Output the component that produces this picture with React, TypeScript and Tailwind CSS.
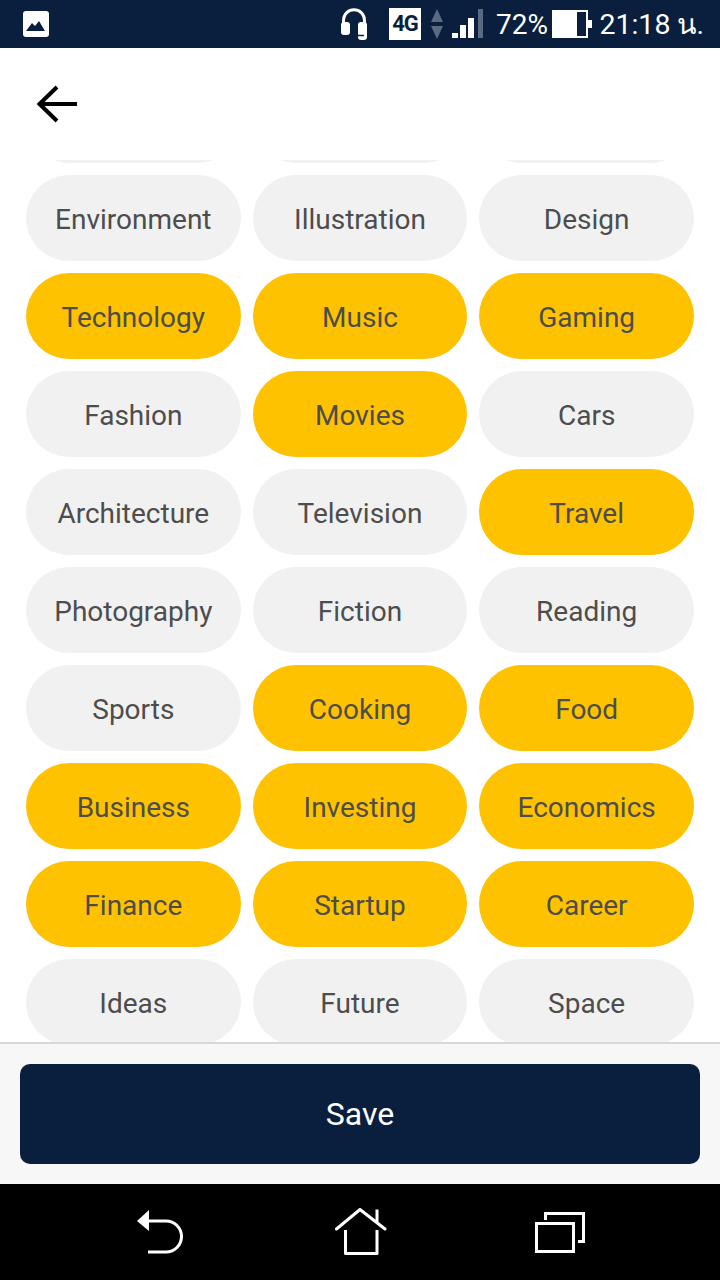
import React from 'react';

const rows: [string, boolean][][] = [
  [['', false], ['', false], ['', false]],
  [['Environment', false], ['Illustration', false], ['Design', false]],
  [['Technology', true], ['Music', true], ['Gaming', true]],
  [['Fashion', false], ['Movies', true], ['Cars', false]],
  [['Architecture', false], ['Television', false], ['Travel', true]],
  [['Photography', false], ['Fiction', false], ['Reading', false]],
  [['Sports', false], ['Cooking', true], ['Food', true]],
  [['Business', true], ['Investing', true], ['Economics', true]],
  [['Finance', true], ['Startup', true], ['Career', true]],
  [['Ideas', false], ['Future', false], ['Space', false]],
];

const StatusBar = () => (
  <div className="h-12 bg-[#0a1f3d] flex items-center text-white shrink-0">
    <svg className="ml-[23px]" width="27" height="26" viewBox="0 0 27 26">
      <rect width="26" height="26" x="0" y="0" rx="3" fill="#fff" />
      <path d="M3 20 L9 12 L12 15 L16 10 L22 20 Z" fill="#0a1f3d" />
    </svg>
    <div className="flex-1" />
    <svg width="26" height="32" viewBox="0 0 26 32" fill="none">
      <path d="M2.5 17 V13 C2.5 -2 23.5 -2 23.5 13 V17" stroke="#fff" strokeWidth="3" />
      <rect x="0" y="14" width="9" height="13" rx="3" fill="#fff" />
      <rect x="17" y="14" width="9" height="18" rx="3" fill="#fff" />
      <path d="M16 27.5 H23" stroke="#0a1f3d" strokeWidth="1.5" />
    </svg>
    <div className="ml-[22px] w-8 h-8 bg-white text-[#0a1f3d] text-[22px] font-bold leading-8 text-center tracking-[-1px]">4G</div>
    <svg className="ml-[9px]" width="14" height="32" viewBox="0 0 14 32">
      <path d="M7 1 L13 14 H1 Z" fill="#5a6a80" />
      <path d="M1 18 H13 L7 31 Z" fill="#5a6a80" />
    </svg>
    <svg className="ml-[8px]" width="32" height="30" viewBox="0 0 32 30">
      <rect x="0" y="24" width="6" height="5" fill="#fff" />
      <rect x="8" y="16" width="6" height="13" fill="#fff" />
      <rect x="16" y="9" width="6" height="20" fill="#fff" />
      <rect x="26" y="0" width="5" height="29" fill="#5a6a80" />
    </svg>
    <span className="ml-[12px] w-[52px] pt-[2px] text-[28px] leading-none whitespace-nowrap">72%</span>
    <svg className="ml-[4px]" width="40" height="28" viewBox="0 0 40 28">
      <rect x="0" y="0" width="36" height="28" fill="#fff" />
      <rect x="25" y="2" width="9" height="24" fill="#0a1f3d" />
      <rect x="36" y="10" width="4" height="8" fill="#fff" />
    </svg>
    <span className="ml-[6px] mr-[16px] w-[106px] pt-[2px] text-right text-[28.5px] leading-none whitespace-nowrap">21:18 น.</span>
  </div>
);

const Header = () => (
  <div className="h-28 bg-white flex items-center pl-9 shrink-0">
    <svg width="42" height="40" viewBox="0 0 42 40" fill="none" stroke="#000" strokeWidth="4">
      <path d="M41 20 H4" />
      <path d="M21 3 L3.5 20 L21 37" />
    </svg>
  </div>
);

const Chip = ({ label, on }: { label: string; on: boolean }) => (
  <div className={`h-[86px] rounded-[43px] pt-1 flex items-center justify-center text-[28px] text-[#4d4d4d] ${on ? 'bg-[#ffc200]' : 'bg-[#f1f1f1]'}`}>
    {label}
  </div>
);

const NavBar = () => (
  <div className="h-24 bg-black flex items-start shrink-0 pl-[137px]">
    <svg className="mt-[25px]" width="48" height="46" viewBox="0 0 48 46" fill="none">
      <path d="M12 1 V22 L0 12 Z" fill="#fff" />
      <path d="M11 12 H29 A15.5 15.5 0 0 1 29 43 H11" stroke="#fff" strokeWidth="3" />
    </svg>
    <svg className="mt-6 ml-[150px]" width="52" height="48" viewBox="0 0 52 48" fill="none" stroke="#fff" strokeWidth="3" strokeLinecap="round" strokeLinejoin="round">
      <path d="M1.5 21 L25 1.5 L50 21" />
      <path d="M42 1.5 V14" strokeLinecap="butt" />
      <path d="M10.5 22 V45.5 H42 V22" strokeLinecap="butt" />
    </svg>
    <svg className="mt-[27px] ml-[148px]" width="52" height="44" viewBox="0 0 52 44" fill="none" stroke="#fff" strokeWidth="3">
      <rect x="1.5" y="12.5" width="37" height="28" />
      <path d="M10.5 9 V2.5 H48.5 V30.5 H43" />
    </svg>
  </div>
);

export default function App() {
  return (
    <div className="w-[720px] h-[1280px] flex flex-col overflow-hidden bg-white font-['Roboto',sans-serif]">
      <StatusBar />
      <Header />
      <div className="flex-1 min-h-0 overflow-hidden">
        <div className="-mt-[83px] ml-[26px] w-[668px] grid grid-cols-3 gap-3">
          {rows.flat().map(([label, on], i) => (
            <Chip key={i} label={label} on={on} />
          ))}
        </div>
      </div>
      <div className="h-[142px] shrink-0 bg-[#f7f7f7] border-t-2 border-[#d8d8d8] px-5 pt-5">
        <button className="w-full h-[100px] rounded-[10px] bg-[#0a1f3d] text-white text-[32px]">Save</button>
      </div>
      <NavBar />
    </div>
  );
}
